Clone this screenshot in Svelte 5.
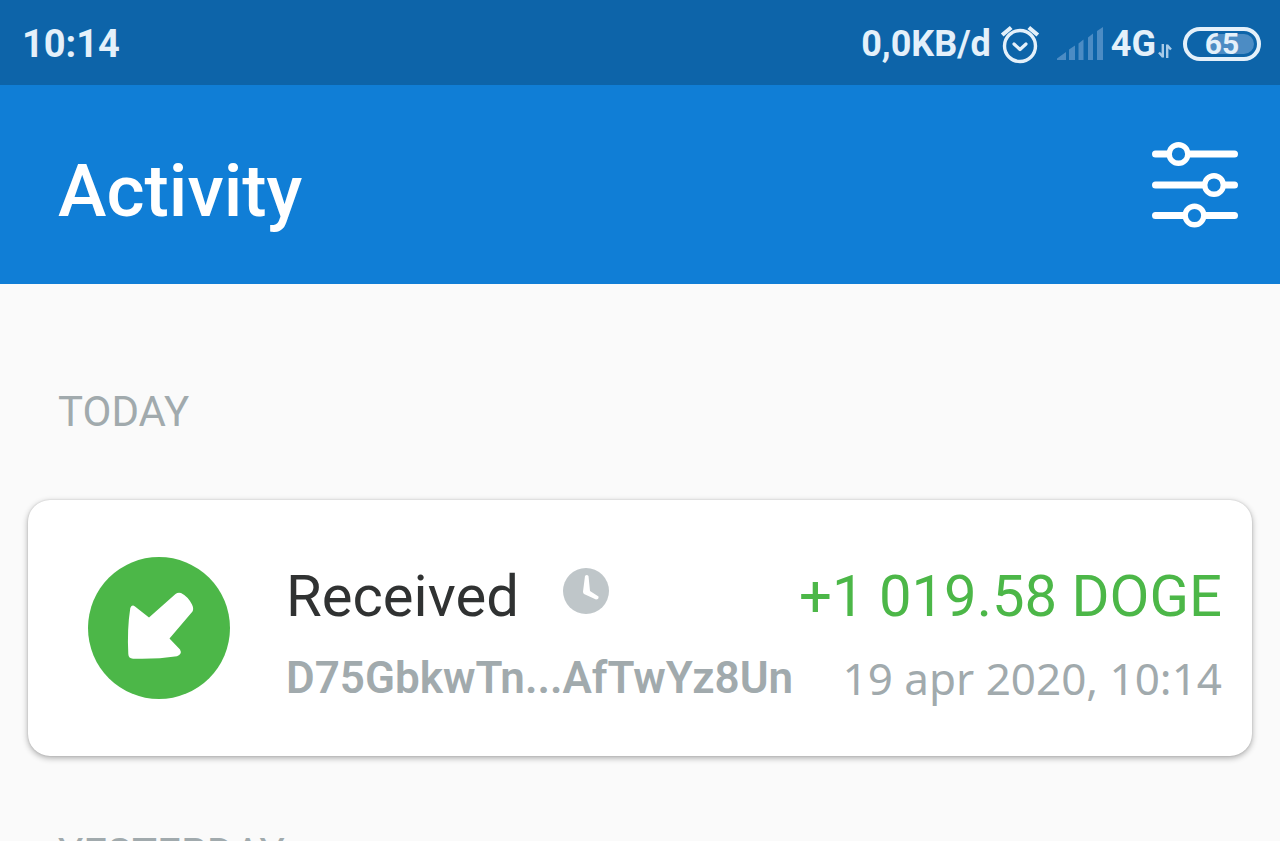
<script>
  const transaction = {
    type: 'Received',
    address: 'D75GbkwTn...AfTwYz8Un',
    amount: '+1 019.58 DOGE',
    date: '19 apr 2020, 10:14'
  };
</script>

<div class="screen">
  <div class="status">
    <span class="time">10:14</span>
    <div class="indicators">
      <span>0,0KB/d</span>
      <svg class="alarm" width="40" height="40" viewBox="0 0 40 40" fill="none" stroke="#e4f0fa" stroke-linecap="round" aria-label="Alarm">
        <circle cx="20" cy="22" r="15.500" stroke-width="3.400" />
        <path d="M14 20l6 5.500 6-5.500" stroke-width="3.200" stroke-linejoin="round" />
        <path d="M2.200 11l9-7.500M37.800 11l-9-7.500" stroke-width="4.200" stroke-linecap="butt" />
      </svg>
      <svg class="signal" width="46" height="34" viewBox="0 0 46 34" fill="#4c8cc4" aria-label="Signal">
        <path d="M0 33v-1.500L9 25v8zM12 22.500l6-4V33h-6zM21.500 16.500l5-4V33h-5zM31 10.500l5-4V33h-5zM40 4l6-4v33h-6z" />
      </svg>
      <span>4G</span>
      <svg class="data" width="14" height="16" viewBox="0 0 14 16" fill="none" stroke="#a9cbe8" stroke-width="2.400" aria-label="Data">
        <path d="M4.800 1v13.500M5 14L1 9.500M9.200 15V1.500M9 2l4 4.500" />
      </svg>
      <span class="battery"><span class="level"></span><span class="percent">65</span></span>
    </div>
  </div>

  <header>
    <h1>Activity</h1>
    <button type="button" aria-label="Filter">
      <svg width="86" height="86" viewBox="0 0 86 86" fill="none" stroke="#fff" stroke-linecap="round">
        <path d="M3.500 12H15M38 12h44.500M3.500 43H51M73 43h9.500M3.500 73.500H31M54 73.500h28.500" stroke-width="7" />
        <circle cx="26.500" cy="12" r="9.300" stroke-width="5.400" />
        <circle cx="62" cy="43" r="9.300" stroke-width="5.400" />
        <circle cx="42.500" cy="73.500" r="9.300" stroke-width="5.400" />
      </svg>
    </button>
  </header>

  <main>
    <h2>TODAY</h2>
    <article>
      <svg class="direction" width="142" height="142" viewBox="0 0 142 142" aria-hidden="true">
        <circle cx="71" cy="71" r="71" fill="#4cb748" />
        <path fill="#fff" d="M47 49.500Q44 47 42.300 51Q39 72 40.300 97Q40.500 101.500 45 101.700Q68 102.500 89 99.300Q94.500 97 92 92.500L81.500 81.500L104.500 54.500Q106 51.500 104 47.500Q100 39.500 93 36Q90 35 87.500 37L61 60.500Z" />
      </svg>
      <div class="details">
        <div class="row primary">
          <span class="type">
            {transaction.type}
            <svg width="46" height="46" viewBox="0 0 46 46" aria-label="Pending">
              <circle cx="23" cy="23" r="23" fill="#bfc6c9" />
              <path d="M22 8Q23.800 6 25.500 8L27 23L35.500 28.500Q36 31.500 33 31.500L21 26Q20 25 20 23.500Z" fill="#fff" />
            </svg>
          </span>
          <span class="amount">{transaction.amount}</span>
        </div>
        <div class="row secondary">
          <span class="address">{transaction.address}</span>
          <time datetime="2020-04-19T10:14">{transaction.date}</time>
        </div>
      </div>
    </article>
    <h2 class="next">YESTERDAY</h2>
  </main>
</div>

<style>
  :global(body) {
    margin: 0;
    background: #fafafa;
  }

  .screen {
    height: 100vh;
    overflow: hidden;
    background: #fafafa;
    font-family: Roboto, sans-serif;
  }

  .status {
    display: flex;
    align-items: center;
    justify-content: space-between;
    height: 85px;
    padding: 2px 19px 0 22px;
    box-sizing: border-box;
    background: #0d64a9;
    color: #e4f0fa;
    font-size: 36px;
    font-weight: 700;
    line-height: 44px;
  }

  .time {
    font-size: 38px;
  }

  .indicators {
    display: flex;
    align-items: center;
  }

  .alarm {
    margin-left: 9px;
  }

  .signal {
    margin: 0 8px 0 17px;
  }

  .data {
    margin: 14px 11px 0 2px;
  }

  .battery {
    position: relative;
    display: flex;
    align-items: center;
    justify-content: center;
    width: 78px;
    height: 34px;
    box-sizing: border-box;
    border: 4px solid #e4f0fa;
    border-radius: 17px;
    font-size: 30px;
  }

  .level {
    position: absolute;
    inset: 3px 3px 3px 24px;
    border-radius: 4px 10px 10px 4px;
    background: #4c8cc4;
  }

  .percent {
    position: relative;
  }

  header {
    display: flex;
    align-items: center;
    justify-content: space-between;
    height: 199px;
    padding: 0 42px 0 58px;
    box-sizing: border-box;
    background: #107ed6;
    color: #fff;
  }

  h1 {
    margin: 0;
    padding-top: 12px;
    font-size: 73px;
    font-weight: 500;
    line-height: 84px;
  }

  button {
    padding: 0;
    border: 0;
    background: none;
  }

  svg {
    display: block;
    flex: none;
  }

  main {
    padding: 103px 28px 0;
  }

  h2 {
    margin: 0 30px 63px;
    color: #a1aaad;
    font-size: 42px;
    font-weight: 400;
    line-height: 50px;
  }

  .next {
    margin-top: 73px;
  }

  article {
    display: flex;
    align-items: flex-start;
    gap: 56px;
    padding: 57px 30px 52px 60px;
    border-radius: 22px;
    background: #fff;
    box-shadow: 0 2px 6px rgba(0, 0, 0, 0.32), 0 0 2px rgba(0, 0, 0, 0.14);
  }

  .details {
    flex: 1;
    min-width: 0;
  }

  .row {
    display: flex;
    justify-content: space-between;
    white-space: nowrap;
  }

  .primary {
    margin-bottom: 18px;
    font-size: 58px;
    line-height: 78px;
  }

  .type {
    display: flex;
    gap: 44px;
    color: #303232;
  }

  .type svg {
    margin-top: 11px;
  }

  .amount {
    color: #4cb748;
  }

  .secondary {
    padding-bottom: 1px;
    color: #a1aaad;
    font-size: 44px;
    line-height: 50px;
  }

  .address {
    font-weight: 600;
  }

  time {
    font-family: "Noto Sans", sans-serif;
  }
</style>
